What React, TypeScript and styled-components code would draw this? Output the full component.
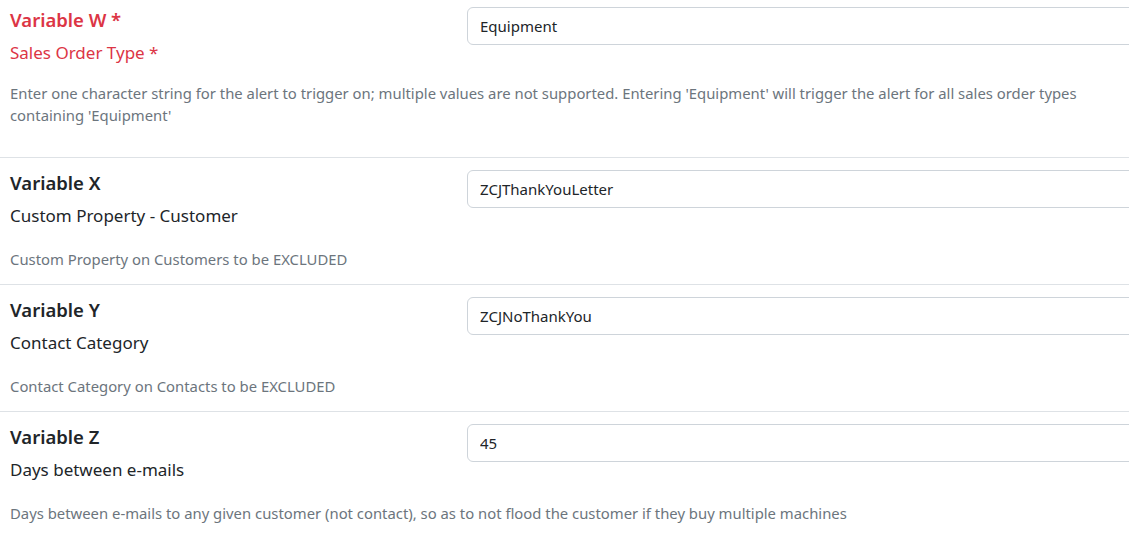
import React from "react";
import styled, { createGlobalStyle } from "styled-components";

const GlobalStyle = createGlobalStyle`
  html, body {
    margin: 0;
    padding: 0;
    background: #fff;
    overflow: hidden;
    font-family: "Noto Sans", "Open Sans", "DejaVu Sans", sans-serif;
    color: #212529;
  }
`;

const Page = styled.div`
  width: 1400px;
  margin-top: -5px;
`;

const Row = styled.div<{ $first?: boolean }>`
  display: grid;
  grid-template-columns: 457px 700px;
  padding: 12px 0 ${(p) => (p.$first ? "17px" : "0")} 10px;
  border-top: ${(p) => (p.$first ? "none" : "1px solid #dee2e6")};
`;

const Labels = styled.div`
  display: flex;
  flex-direction: column;
`;

const Title = styled.div<{ $required?: boolean }>`
  font-size: 18.5px;
  font-weight: 600;
  line-height: 28px;
  color: ${(p) => (p.$required ? "#dc3545" : "#212529")};
  margin-top: -1px;
`;

const Subtitle = styled.div<{ $required?: boolean }>`
  font-size: 17px;
  line-height: 24px;
  margin-top: 7px;
  color: ${(p) => (p.$required ? "#dc3545" : "#212529")};
`;

const Help = styled.p<{ $first?: boolean }>`
  grid-column: 1 / -1;
  margin: ${(p) => (p.$first ? "17px" : "20px")} 0 0;
  padding-bottom: 14px;
  font-size: 14.85px;
  line-height: 22px;
  color: #6c757d;
  max-width: 1070px;
`;

const Input = styled.input`
  box-sizing: border-box;
  width: 100%;
  height: 38px;
  margin-top: 0;
  padding: 0 12px;
  border: 1px solid #ced4da;
  border-radius: 6px;
  font-family: inherit;
  font-size: 15px;
  color: #212529;
  background: #fff;
  outline: none;
`;

type Field = {
  title: string;
  subtitle: string;
  value: string;
  help: string;
  required?: boolean;
};

const fields: Field[] = [
  {
    title: "Variable W *",
    subtitle: "Sales Order Type *",
    value: "Equipment",
    help: "Enter one character string for the alert to trigger on; multiple values are not supported. Entering 'Equipment' will trigger the alert for all sales order types containing 'Equipment'",
    required: true,
  },
  {
    title: "Variable X",
    subtitle: "Custom Property - Customer",
    value: "ZCJThankYouLetter",
    help: "Custom Property on Customers to be EXCLUDED",
  },
  {
    title: "Variable Y",
    subtitle: "Contact Category",
    value: "ZCJNoThankYou",
    help: "Contact Category on Contacts to be EXCLUDED",
  },
  {
    title: "Variable Z",
    subtitle: "Days between e-mails",
    value: "45",
    help: "Days between e-mails to any given customer (not contact), so as to not flood the customer if they buy multiple machines",
  },
];

export default function App() {
  return (
    <>
      <GlobalStyle />
      <Page>
        {fields.map((f, i) => (
          <Row key={f.title} $first={i === 0}>
            <Labels>
              <Title $required={f.required}>{f.title}</Title>
              <Subtitle $required={f.required}>{f.subtitle}</Subtitle>
            </Labels>
            <div>
              <Input defaultValue={f.value} readOnly />
            </div>
            <Help $first={i === 0}>{f.help}</Help>
          </Row>
        ))}
      </Page>
    </>
  );
}
